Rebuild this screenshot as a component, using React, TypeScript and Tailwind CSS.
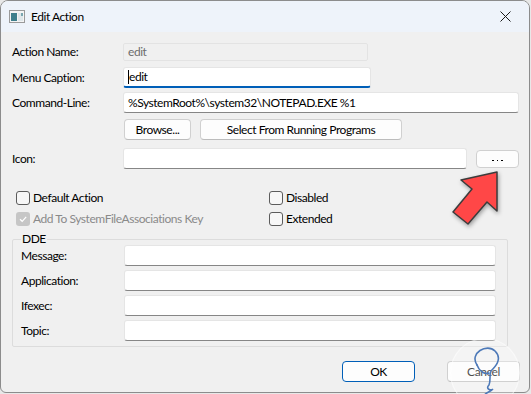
import React from 'react';

const font = { fontFamily: 'Lato, Roboto, "Noto Sans", sans-serif' };

function Field({ w, children, active }: { w: string; children?: React.ReactNode; active?: boolean }) {
  return (
    <div
      className={`${w} h-[21px] bg-white rounded-[3px] border border-[#e5e5e5] flex items-center pl-[4px] text-[12px] text-black ${
        active ? 'border-b-2 border-b-[#005fb8]' : 'border-b-[#868686]'
      }`}
    >
      {children}
    </div>
  );
}

function Btn({ w, children, primary }: { w: string; children: React.ReactNode; primary?: boolean }) {
  return (
    <div
      className={`${w} h-[21px] rounded-[4px] bg-[#fdfdfd] flex items-center justify-center text-[12px] text-black ${
        primary ? 'border border-[#005fb8]' : 'border border-[#d0d0d0] border-b-[#bcbcbc]'
      }`}
    >
      {children}
    </div>
  );
}

function Check({ label, disabled, checked }: { label: string; disabled?: boolean; checked?: boolean }) {
  return (
    <div className="flex items-center h-[14px]">
      {checked ? (
        <div className="w-[14px] h-[14px] rounded-[3px] bg-[#c6c6c6] flex items-center justify-center">
          <svg width="10" height="10" viewBox="0 0 10 10">
            <path d="M2 5.2 L4.2 7.3 L8.2 2.8" stroke="#fff" strokeWidth="1.2" fill="none" />
          </svg>
        </div>
      ) : (
        <div className="w-[14px] h-[14px] rounded-[3px] border border-[#5c5c5c] bg-[#f7f7f7]" />
      )}
      <span className={`ml-[3px] text-[12px] ${disabled ? 'text-[#8a8a8a]' : 'text-black'}`}>{label}</span>
    </div>
  );
}

export default function App() {
  return (
    <div className="w-[531px] h-[394px] relative overflow-hidden bg-[#e8e8e8] tracking-[-0.45px]" style={font}>
      <div className="w-[530px] h-[393px] border border-[#8c8c8c] rounded-t-[8px] rounded-b-[6px] overflow-hidden bg-[#f0f0f0] flex flex-col">
        {/* title bar */}
        <div className="h-[31px] bg-[#eef3fa] flex items-center shrink-0">
          <svg width="16" height="13" viewBox="0 0 16 13" className="ml-[8px]">
            <rect x="0.5" y="0.5" width="15" height="12" fill="#f4f4f4" stroke="#9a9a9a" />
            <rect x="2" y="3" width="6" height="8" fill="#3f7f8c" />
            <rect x="9" y="3" width="5" height="8" fill="#dfe7ea" />
            <rect x="12" y="3" width="2" height="3" fill="#7aa6b0" />
          </svg>
          <span className="ml-[6px] text-[12px] text-black">Edit Action</span>
          <svg width="11" height="11" viewBox="0 0 11 11" className="ml-auto mr-[18px]">
            <path d="M0.5 0.5 L10.5 10.5 M10.5 0.5 L0.5 10.5" stroke="#1a1a1a" strokeWidth="1" />
          </svg>
        </div>

        {/* body */}
        <div className="flex flex-col pl-[11px] text-[12px] text-black">
          <div className="flex items-center mt-[11px] h-[18px]">
            <span className="w-[111px]">Action Name:</span>
            <div className="w-[245px] h-[18px] border border-[#e3e3e3] rounded-[2px] flex items-center pl-[4px] text-[#6d6d6d]">edit</div>
          </div>
          <div className="flex items-center mt-[6px]">
            <span className="w-[111px]">Menu Caption:</span>
            <Field w="w-[248px]" active>
              <span className="border-l border-black pl-[0px] leading-[14px]">edit</span>
            </Field>
          </div>
          <div className="flex items-center mt-[4px]">
            <span className="w-[111px]">Command-Line:</span>
            <Field w="w-[396px]">%SystemRoot%\system32\NOTEPAD.EXE %1</Field>
          </div>
          <div className="flex items-center mt-[6px] pl-[112px] gap-[9px]">
            <Btn w="w-[67px]">Browse...</Btn>
            <Btn w="w-[202px]">Select From Running Programs</Btn>
          </div>
          <div className="flex items-center mt-[8px]">
            <span className="w-[111px]">Icon:</span>
            <Field w="w-[344px]" />
            <div className="ml-[9px]">
              <div className="w-[43px] h-[18px] rounded-[4px] bg-[#fdfdfd] border border-[#d0d0d0] flex items-center justify-center gap-[3px] pt-[4px]">
                <span className="w-[1.5px] h-[1.5px] bg-black" />
                <span className="w-[1.5px] h-[1.5px] bg-black" />
                <span className="w-[1.5px] h-[1.5px] bg-black" />
              </div>
            </div>
          </div>

          <div className="flex mt-[22px] pl-[4px]">
            <div className="w-[253px] flex flex-col gap-[7px]">
              <Check label="Default Action" />
              <Check label="Add To SystemFileAssociations Key" disabled checked />
            </div>
            <div className="flex flex-col gap-[7px]">
              <Check label="Disabled" />
              <Check label="Extended" />
            </div>
          </div>

          {/* DDE group */}
          <div className="relative mt-[13px] w-[496px] h-[108px] border border-[#dcdcdc] rounded-[2px] pl-[8px] pt-[5px] flex flex-col gap-[4px]">
            <span className="absolute -top-[8px] left-[8px] px-[1px] bg-[#f0f0f0] leading-[14px]">DDE</span>
            {['Message:', 'Application:', 'Ifexec:', 'Topic:'].map((l) => (
              <div key={l} className="flex items-center">
                <span className="w-[103px]">{l}</span>
                <Field w="w-[372px]" />
              </div>
            ))}
          </div>

          <div className="flex mt-[14px] pl-[330px] gap-[32px]">
            <Btn w="w-[73px]" primary>OK</Btn>
            <Btn w="w-[73px]">Cancel</Btn>
          </div>
        </div>
      </div>

      {/* red arrow annotation */}
      <svg width="70" height="70" viewBox="0 0 70 70" className="absolute left-[441px] top-[166px]" style={{ filter: 'drop-shadow(1px 2px 2px rgba(0,0,0,0.35))' }}>
        <path
          d="M56 6 L56 45 L46 36 L27 58 L12 46 L31 23 L20 14 Z"
          fill="#ff4747"
          stroke="#3c3c3c"
          strokeWidth="1.5"
          strokeLinejoin="round"
        />
      </svg>

      {/* watermark */}
      <div className="absolute left-[450px] top-[338px] w-[70px] h-[70px] rounded-full bg-white/30 border border-white/50">
        <svg width="70" height="70" viewBox="0 0 70 70">
          <path
            d="M26 26 C18 14 36 4 44 12 C52 20 44 28 40 32 C38 36 40 42 38 46 C34 50 40 52 42 50 C38 54 32 54 34 58 C36 60 42 58 40 56"
            stroke="#4d79b8"
            strokeWidth="1.6"
            fill="none"
            strokeLinecap="round"
          />
          <path d="M26 26 C28 32 34 36 38 34" stroke="#4d79b8" strokeWidth="1.6" fill="none" strokeLinecap="round" />
        </svg>
      </div>
    </div>
  );
}
